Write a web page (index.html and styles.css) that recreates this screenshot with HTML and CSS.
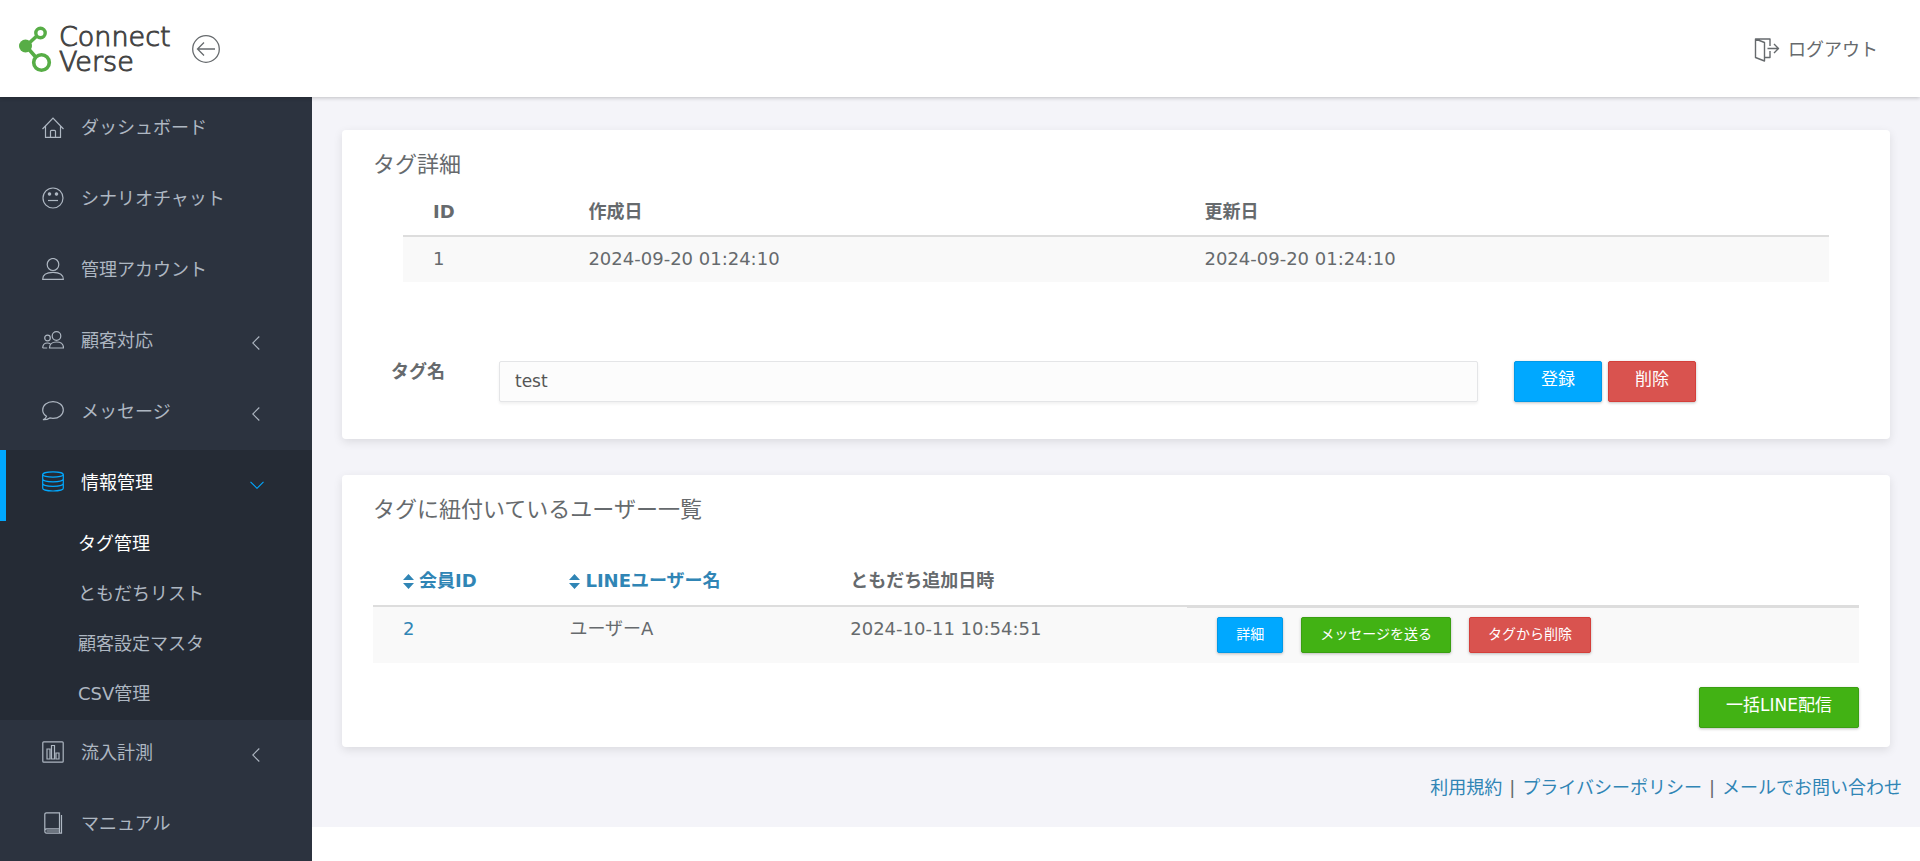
FILE: index.html
```html
<!DOCTYPE html>
<html lang="ja">
<head>
<meta charset="utf-8">
<meta name="viewport" content="width=device-width, initial-scale=1">
<title>Connect Verse</title>
<link rel="stylesheet" href="styles.css">
</head>
<body>
<header class="header">
  <a class="logo" href="#">
    <svg class="logo-mark" width="34" height="48" viewBox="0 0 34 48" aria-hidden="true">
      <path d="M7 21L21 8M7 21L21 37" fill="none" stroke="#57ad46" stroke-width="3.6"/>
      <circle cx="6.500" cy="21" r="6.500" fill="#57ad46"/>
      <circle cx="21.500" cy="8" r="4.700" fill="#fff" stroke="#57ad46" stroke-width="3.400"/>
      <circle cx="22.500" cy="37.500" r="7.800" fill="#fff" stroke="#57ad46" stroke-width="3.600"/>
    </svg>
    <span class="logo-text">Connect<br>Verse</span>
  </a>
  <button class="collapse" type="button" aria-label="メニューを閉じる">
    <svg width="30" height="30" viewBox="0 0 30 30" fill="none" stroke="currentColor" stroke-width="1.300"><circle cx="15" cy="15" r="13.300"/><path d="M24 15H6.500M13 8.500L6.500 15l6.500 6.500"/></svg>
  </button>
  <a class="logout" href="#">
    <svg width="26" height="24" viewBox="0 0 26 24" fill="none" stroke="currentColor" stroke-width="1.400" stroke-linejoin="round"><path d="M1.500 1l9 3.500v18.500l-9-3.500zM1.500 1H16v7M16 13v6.500h-5.500M13.500 10.500h11M20 6l4.500 4.500L20 15"/></svg>
    <span>ログアウト</span>
  </a>
</header>
<div class="layout">
  <nav class="sidebar">
    <ul class="menu">
      <li><a class="item" href="#"><svg class="icon" viewBox="0 0 22 22"><path d="M.5 13L11 2 21.500 13M3.500 10v11.300h15V10M8.500 21.300v-6q0-1 1-1h3q1 0 1 1v6"/></svg><span>ダッシュボード</span></a></li>
      <li><a class="item" href="#"><svg class="icon" viewBox="0 0 22 22"><circle cx="11" cy="11" r="10"/><circle class="fill" cx="7.500" cy="7" r="1.200"/><circle class="fill" cx="14.500" cy="7" r="1.200"/><path d="M6 13.500h10"/></svg><span>シナリオチャット</span></a></li>
      <li><a class="item" href="#"><svg class="icon" viewBox="0 0 22 22"><ellipse cx="11" cy="6.500" rx="5.800" ry="6"/><path d="M.7 21.300c0-4.500 4-7 10.300-7s10.300 2.500 10.300 7z"/></svg><span>管理アカウント</span></a></li>
      <li><a class="item" href="#"><svg class="icon" viewBox="0 0 22 22"><circle cx="14.500" cy="7" r="4.300"/><path d="M7.500 19c0-4 2.500-6 7-6s7 2 7 6z"/><circle cx="5.500" cy="9" r="2.800"/><path d="M.7 19c0-3.500 1.500-5 4.800-5 1.200 0 2 .2 2.800.7M.7 19h4.500"/></svg><span>顧客対応</span><svg class="arrow" viewBox="0 0 8 14"><path d="M7.300.5L.8 7l6.500 6.500"/></svg></a></li>
      <li><a class="item" href="#"><svg class="icon" viewBox="0 0 22 22"><path d="M4.500 16.300C2 14.700.7 12.500.7 10 .7 5.300 5.200 1.700 11 1.700S21.300 5.300 21.300 10 16.800 18.300 11 18.300c-1.200 0-2.200-.1-3.200-.4-2.100 1.500-4.300 2-6.800 1.800 1.800-.7 3-1.700 3.500-3.400z"/></svg><span>メッセージ</span><svg class="arrow" viewBox="0 0 8 14"><path d="M7.300.5L.8 7l6.500 6.500"/></svg></a></li>
      <li class="open"><a class="item active" href="#"><svg class="icon" viewBox="0 0 22 22"><ellipse cx="11" cy="3.500" rx="10.300" ry="2.700"/><path d="M.7 3.500v13.700c0 1.500 4.500 2.800 10.300 2.800s10.300-1.300 10.300-2.800V3.500M.7 8c0 1.500 4.500 2.800 10.300 2.800S21.300 9.500 21.300 8M.7 12.600c0 1.500 4.500 2.800 10.300 2.800s10.300-1.300 10.300-2.800"/></svg><span>情報管理</span><svg class="arrow down" viewBox="0 0 14 8"><path d="M.5.8L7 7.300 13.500.8"/></svg></a>
        <ul class="submenu">
          <li><a class="current" href="#">タグ管理</a></li>
          <li><a href="#">ともだちリスト</a></li>
          <li><a href="#">顧客設定マスタ</a></li>
          <li><a href="#">CSV管理</a></li>
        </ul>
      </li>
      <li><a class="item" href="#"><svg class="icon" viewBox="0 0 22 22"><rect x=".8" y=".8" width="20.400" height="20.400" rx="1"/><path d="M5 18V8h3v10zM9.500 18V4.500h3V18zM14 18v-6h3v6z"/></svg><span>流入計測</span><svg class="arrow" viewBox="0 0 8 14"><path d="M7.300.5L.8 7l6.500 6.500"/></svg></a></li>
      <li><a class="item" href="#"><svg class="icon" viewBox="0 0 22 22"><path d="M4.500.8h13v16h-13q-1.700 0-1.700 2.200t1.700 2.200h15V3M2.800 19V2.500Q2.800.8 4.500.8M17.500 17v4M4.500 19h13"/></svg><span>マニュアル</span></a></li>
    </ul>
  </nav>
  <div class="content">
    <main>
      <section class="card">
        <h2>タグ詳細</h2>
        <div class="inset">
          <table class="table">
            <colgroup><col class="col-id"><col class="col-created"><col></colgroup>
            <thead><tr><th>ID</th><th>作成日</th><th>更新日</th></tr></thead>
            <tbody><tr><td>1</td><td>2024-09-20 01:24:10</td><td>2024-09-20 01:24:10</td></tr></tbody>
          </table>
        </div>
        <form class="tag-form">
          <label for="tag-name">タグ名</label>
          <input id="tag-name" type="text" value="test">
          <div class="form-actions">
            <button class="btn blue" type="button">登録</button>
            <button class="btn red" type="button">削除</button>
          </div>
        </form>
      </section>
      <section class="card">
        <h2>タグに紐付いているユーザー一覧</h2>
        <table class="table users">
          <colgroup><col class="col-member"><col class="col-name"><col class="col-added"><col></colgroup>
          <thead><tr>
            <th><a class="sort" href="#"><svg width="11" height="16" viewBox="0 0 11 16" fill="currentColor"><path d="M5.500 1L11 7H0zM5.500 16L0 10h11z"/></svg>会員ID</a></th>
            <th><a class="sort" href="#"><svg width="11" height="16" viewBox="0 0 11 16" fill="currentColor"><path d="M5.500 1L11 7H0zM5.500 16L0 10h11z"/></svg>LINEユーザー名</a></th>
            <th>ともだち追加日時</th>
            <th></th>
          </tr></thead>
          <tbody><tr>
            <td><a href="#">2</a></td>
            <td>ユーザーA</td>
            <td>2024-10-11 10:54:51</td>
            <td class="actions-cell"><div class="row-actions">
              <button class="btn small blue" type="button">詳細</button>
              <button class="btn small green" type="button">メッセージを送る</button>
              <button class="btn small red" type="button">タグから削除</button>
            </div></td>
          </tr></tbody>
        </table>
        <div class="bulk"><button class="btn green" type="button">一括LINE配信</button></div>
      </section>
    </main>
    <footer class="footer">
      <a href="#">利用規約</a><span>|</span><a href="#">プライバシーポリシー</a><span>|</span><a href="#">メールでお問い合わせ</a>
    </footer>
  </div>
</div>
</body>
</html>
```
FILE: styles.css
```css
* { box-sizing: border-box; }

body {
  margin: 0;
  background: #fff;
  color: #666a6d;
  font: 18px/27px "DejaVu Sans", "Noto Sans CJK JP", sans-serif;
}

a { color: #3085b5; text-decoration: none; }
ul { margin: 0; padding: 0; list-style: none; }

/* Header */
.header {
  position: relative;
  z-index: 1;
  display: flex;
  align-items: center;
  height: 97px;
  padding: 0 42px 0 19px;
  background: #fff;
  box-shadow: 0 1px 4px rgba(0, 0, 0, .22);
}
.logo { display: flex; align-items: center; gap: 6px; color: #444; }
.logo-text {
  font-size: 27px;
  line-height: 25px;
  font-weight: 200;
  -webkit-text-stroke: 1px #444;
}
.collapse {
  display: flex;
  margin-left: 20px;
  padding: 0;
  border: 0;
  background: none;
  color: #666a6d;
}
.logout {
  display: flex;
  align-items: center;
  gap: 8px;
  margin-left: auto;
  padding-top: 2px;
  color: #666a6d;
}

/* Sidebar */
.layout { display: flex; align-items: flex-start; margin-top: -2px; }
.sidebar {
  flex: 0 0 312px;
  height: calc(100vh - 95px);
  overflow-y: auto;
  scrollbar-width: none;
  background: #2c333f;
}
.item {
  display: flex;
  align-items: center;
  height: 71px;
  padding: 0 52px 7px 36px;
  border-left: 6px solid transparent;
  color: #aeb7c2;
}
.menu > li:last-child .item { height: 70px; padding-bottom: 6px; }
.icon {
  width: 22px;
  height: 22px;
  margin-right: 17px;
  fill: none;
  stroke: currentColor;
  stroke-width: 1.2;
}
.icon .fill { fill: currentColor; }
.arrow {
  width: 8px;
  height: 14px;
  margin: 5px 0 0 auto;
  fill: none;
  stroke: currentColor;
  stroke-width: 1.1;
}
.arrow.down { width: 14px; height: 8px; margin-right: -4px; }
.open { background: #252b35; }
.item.active { border-left-color: #00a8ff; color: #fff; }
.active .icon, .active .arrow { color: #00a8ff; }
.submenu { padding-left: 78px; }
.submenu a { display: block; height: 50px; padding-top: 9px; color: #aeb7c2; }
.submenu li:last-child a { height: 49px; }
.submenu .current { color: #fff; }

/* Content */
.content { flex: 1; min-width: 0; background: #f4f4f9; }
main { display: grid; gap: 36px; padding: 35px 30px 27px; }
.card {
  min-width: 0;
  padding: 19px 31px;
  border-radius: 4px;
  background: #fff;
  box-shadow: 0 3px 10px rgba(0, 0, 0, .1);
}
h2 { margin: 0; font-size: 22px; line-height: 32px; font-weight: 400; }

.table {
  width: 100%;
  border-collapse: separate;
  border-spacing: 0;
  table-layout: fixed;
}
.col-id { width: 10.9%; }
.col-created { width: 43.2%; }
.col-member { width: 11.2%; }
.col-name { width: 18.9%; }
.col-added { width: 24.7%; }
th, td { padding: 8px 0 10px 30px; text-align: left; vertical-align: top; }
th { border-bottom: 2px solid #ddd; }
td { background: #f9f9f9; }
.inset { margin: 9px 30px 0; }
.users { margin-top: 33px; }
.users th { padding-bottom: 11px; }
.users td { height: 54px; }
.users .actions-cell { padding-top: 9px; border-top: 1px solid #ddd; }
.sort { display: flex; align-items: center; gap: 5px; }
.row-actions { display: flex; gap: 18px; }

.tag-form {
  display: grid;
  grid-template-columns: 108px minmax(0, 1fr) 381px;
  align-items: start;
  padding: 79px 0 18px 18px;
}
.tag-form label { font-weight: 700; line-height: 22px; }
.tag-form input {
  width: 100%;
  height: 41px;
  padding: 0 15px 2px;
  border: 1px solid #e4e5e7;
  border-radius: 2px;
  background: #fcfcfc;
  color: #555;
  font: inherit;
  font-size: 17px;
  box-shadow: 0 2px 3px rgba(0, 0, 0, .06);
}
.form-actions { display: flex; gap: 6px; padding-left: 36px; }

.btn {
  height: 41px;
  padding: 0 26px 4px;
  border: 1px solid;
  border-radius: 2px;
  color: #fff;
  font: inherit;
  font-size: 17px;
  box-shadow: 0 1px 3px rgba(0, 0, 0, .25);
}
.btn.small { height: 36px; padding: 0 18px 2px; font-size: 14px; }
.blue { border-color: #0099e8; background: #00a8ff; }
.red { border-color: #d43f3a; background: #d9534f; }
.green { border-color: #3a9f12; background: #42b214; }
.bulk { display: flex; justify-content: flex-end; margin-top: 24px; }

.footer {
  display: flex;
  flex-wrap: wrap;
  justify-content: flex-end;
  gap: 7px;
  padding: 0 18px 26px;
}
```
